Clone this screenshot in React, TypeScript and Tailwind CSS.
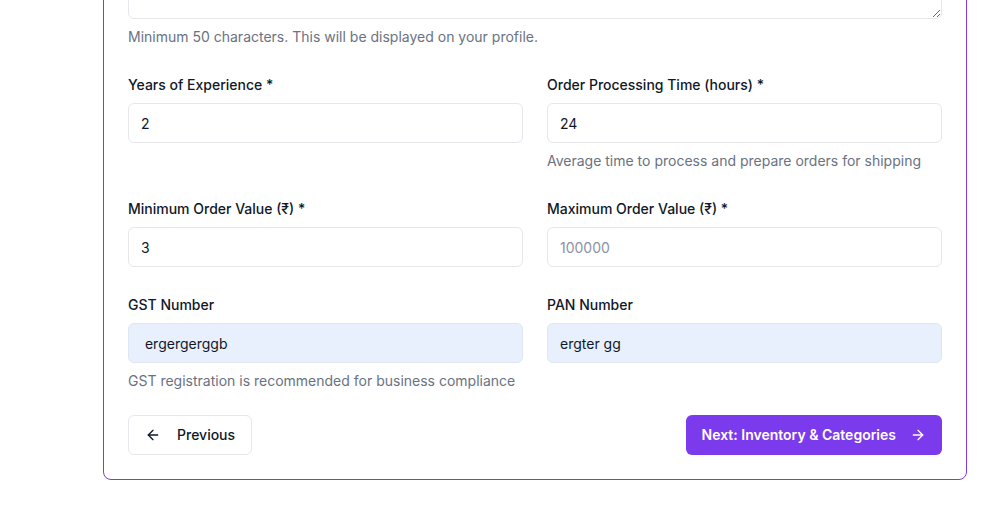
import React from "react";

function ArrowLeft({ className }: { className?: string }) {
  return (
    <svg className={className} width="16" height="16" viewBox="0 0 24 24" fill="none" stroke="currentColor" strokeWidth="2" strokeLinecap="round" strokeLinejoin="round">
      <path d="m12 19-7-7 7-7" />
      <path d="M19 12H5" />
    </svg>
  );
}

function ArrowRight({ className }: { className?: string }) {
  return (
    <svg className={className} width="16" height="16" viewBox="0 0 24 24" fill="none" stroke="currentColor" strokeWidth="2" strokeLinecap="round" strokeLinejoin="round">
      <path d="M5 12h14" />
      <path d="m12 5 7 7-7 7" />
    </svg>
  );
}

function Field({
  label,
  value,
  placeholder,
  helper,
  filled,
}: {
  label: string;
  value?: string;
  placeholder?: string;
  helper?: string;
  filled?: boolean;
}) {
  return (
    <div className="flex flex-col">
      <label className="text-sm leading-5 font-medium text-gray-900 mb-2">{label}</label>
      <input
        readOnly
        value={value ?? ""}
        placeholder={placeholder}
        className={
          filled
            ? "h-10 w-full rounded-md border border-[#dfe6f2] bg-[#e8f0fe] px-3 text-sm text-gray-900 outline-none"
            : "h-10 w-full rounded-md border border-gray-200 bg-white px-3 text-sm text-gray-900 outline-none placeholder:text-[#8a93a3]"
        }
      />
      {helper && <p className="mt-2 text-sm leading-5 text-gray-500">{helper}</p>}
    </div>
  );
}

export default function App() {
  return (
    <div className="h-[521px] w-[994px] overflow-hidden bg-white" style={{ fontFamily: "Inter, 'Noto Sans', sans-serif" }}>
      <div className="ml-[103px] -mt-[100px] w-[864px] rounded-lg border border-[#7c3aed] bg-white p-6">
        <textarea
          readOnly
          className="block h-[94px] w-full rounded-md border border-gray-200 bg-white px-3 py-2 text-sm outline-none"
        />
        <p className="mt-2 text-sm leading-5 text-gray-500">Minimum 50 characters. This will be displayed on your profile.</p>

        <div className="mt-7 grid grid-cols-2 gap-x-6 gap-y-7">
          <Field label="Years of Experience *" value="2" />
          <Field
            label="Order Processing Time (hours) *"
            value="24"
            helper="Average time to process and prepare orders for shipping"
          />
          <Field label="Minimum Order Value (₹) *" value="3" />
          <Field label="Maximum Order Value (₹) *" placeholder="100000" />
          <Field
            label="GST Number"
            value=" ergergerggb"
            filled
            helper="GST registration is recommended for business compliance"
          />
          <Field label="PAN Number" value="ergter gg" filled />
        </div>

        <div className="mt-6 flex items-center justify-between">
          <button className="flex h-10 items-center gap-4 rounded-md border border-gray-200 bg-white px-4 text-sm font-medium text-gray-900">
            <ArrowLeft />
            Previous
          </button>
          <button className="flex h-10 items-center gap-3.5 rounded-md bg-[#7c3aed] px-4 text-sm font-semibold text-white">
            Next: Inventory &amp; Categories
            <ArrowRight />
          </button>
        </div>
      </div>
    </div>
  );
}
